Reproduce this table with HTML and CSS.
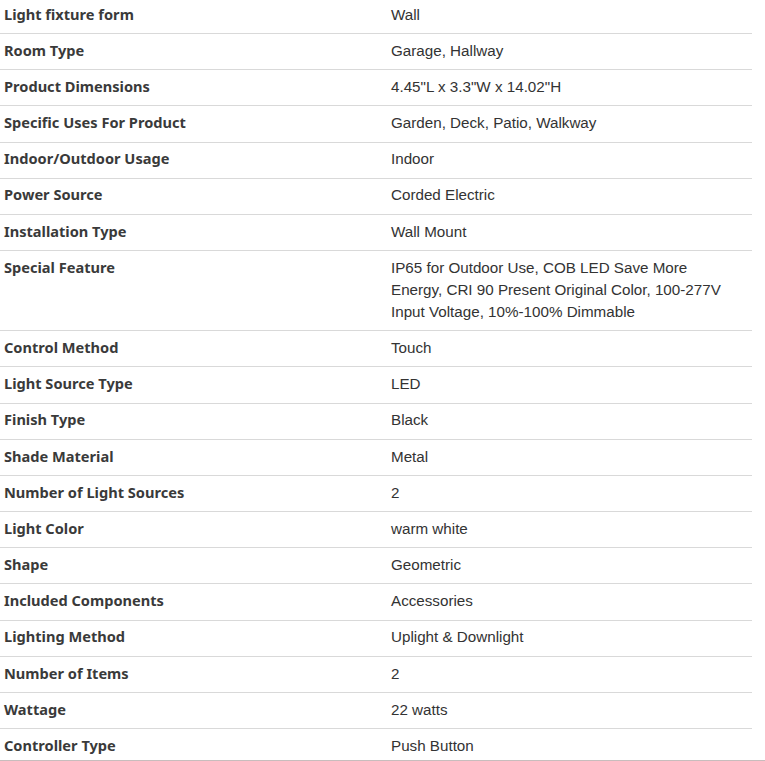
FILE: index.html
```html
<!DOCTYPE html>
<html lang="en">
<head>
<meta charset="utf-8">
<title>Product details</title>
<link rel="stylesheet" href="styles.css">
</head>
<body>
<div class="specs">
  <div class="row"><div class="label">Light fixture form</div><div class="value">Wall</div></div>
  <div class="row"><div class="label">Room Type</div><div class="value">Garage, Hallway</div></div>
  <div class="row"><div class="label">Product Dimensions</div><div class="value">4.45"L x 3.3"W x 14.02"H</div></div>
  <div class="row"><div class="label">Specific Uses For Product</div><div class="value">Garden, Deck, Patio, Walkway</div></div>
  <div class="row"><div class="label">Indoor/Outdoor Usage</div><div class="value">Indoor</div></div>
  <div class="row"><div class="label">Power Source</div><div class="value">Corded Electric</div></div>
  <div class="row"><div class="label">Installation Type</div><div class="value">Wall Mount</div></div>
  <div class="row"><div class="label">Special Feature</div><div class="value">IP65 for Outdoor Use, COB LED Save More Energy, CRI 90 Present Original Color, 100-277V Input Voltage, 10%-100% Dimmable</div></div>
  <div class="row"><div class="label">Control Method</div><div class="value">Touch</div></div>
  <div class="row"><div class="label">Light Source Type</div><div class="value">LED</div></div>
  <div class="row"><div class="label">Finish Type</div><div class="value">Black</div></div>
  <div class="row"><div class="label">Shade Material</div><div class="value">Metal</div></div>
  <div class="row"><div class="label">Number of Light Sources</div><div class="value">2</div></div>
  <div class="row"><div class="label">Light Color</div><div class="value">warm white</div></div>
  <div class="row"><div class="label">Shape</div><div class="value">Geometric</div></div>
  <div class="row"><div class="label">Included Components</div><div class="value">Accessories</div></div>
  <div class="row"><div class="label">Lighting Method</div><div class="value">Uplight &amp; Downlight</div></div>
  <div class="row"><div class="label">Number of Items</div><div class="value">2</div></div>
  <div class="row"><div class="label">Wattage</div><div class="value">22 watts</div></div>
  <div class="row"><div class="label">Controller Type</div><div class="value">Push Button</div></div>
</div>
<div class="frame-edge"></div>
</body>
</html>
```

FILE: styles.css
```css
html, body {
  margin: 0;
  padding: 0;
  background: #ffffff;
  overflow: hidden;
}

.specs {
  width: 752px;
  margin-top: -2.18px;
}

.row {
  display: grid;
  grid-template-columns: 387px 1fr;
  border-bottom: 1px solid #d9d9d9;
}

.label,
.value {
  line-height: 22px;
  color: #333333;
}

.label {
  padding: 4.8px 0 8.38px 4px;
  font-family: "Noto Sans", "Open Sans", sans-serif;
  font-weight: 700;
  font-size: 14.6px;
  color: #3a3a3a;
}

.value {
  padding: 5.8px 16px 7.38px 4px;
  font-family: "Liberation Sans", Arial, sans-serif;
  font-size: 15.2px;
}

.frame-edge {
  position: fixed;
  left: 0;
  right: 0;
  bottom: 0;
  height: 1px;
  background: #c8bdbd;
}
```
